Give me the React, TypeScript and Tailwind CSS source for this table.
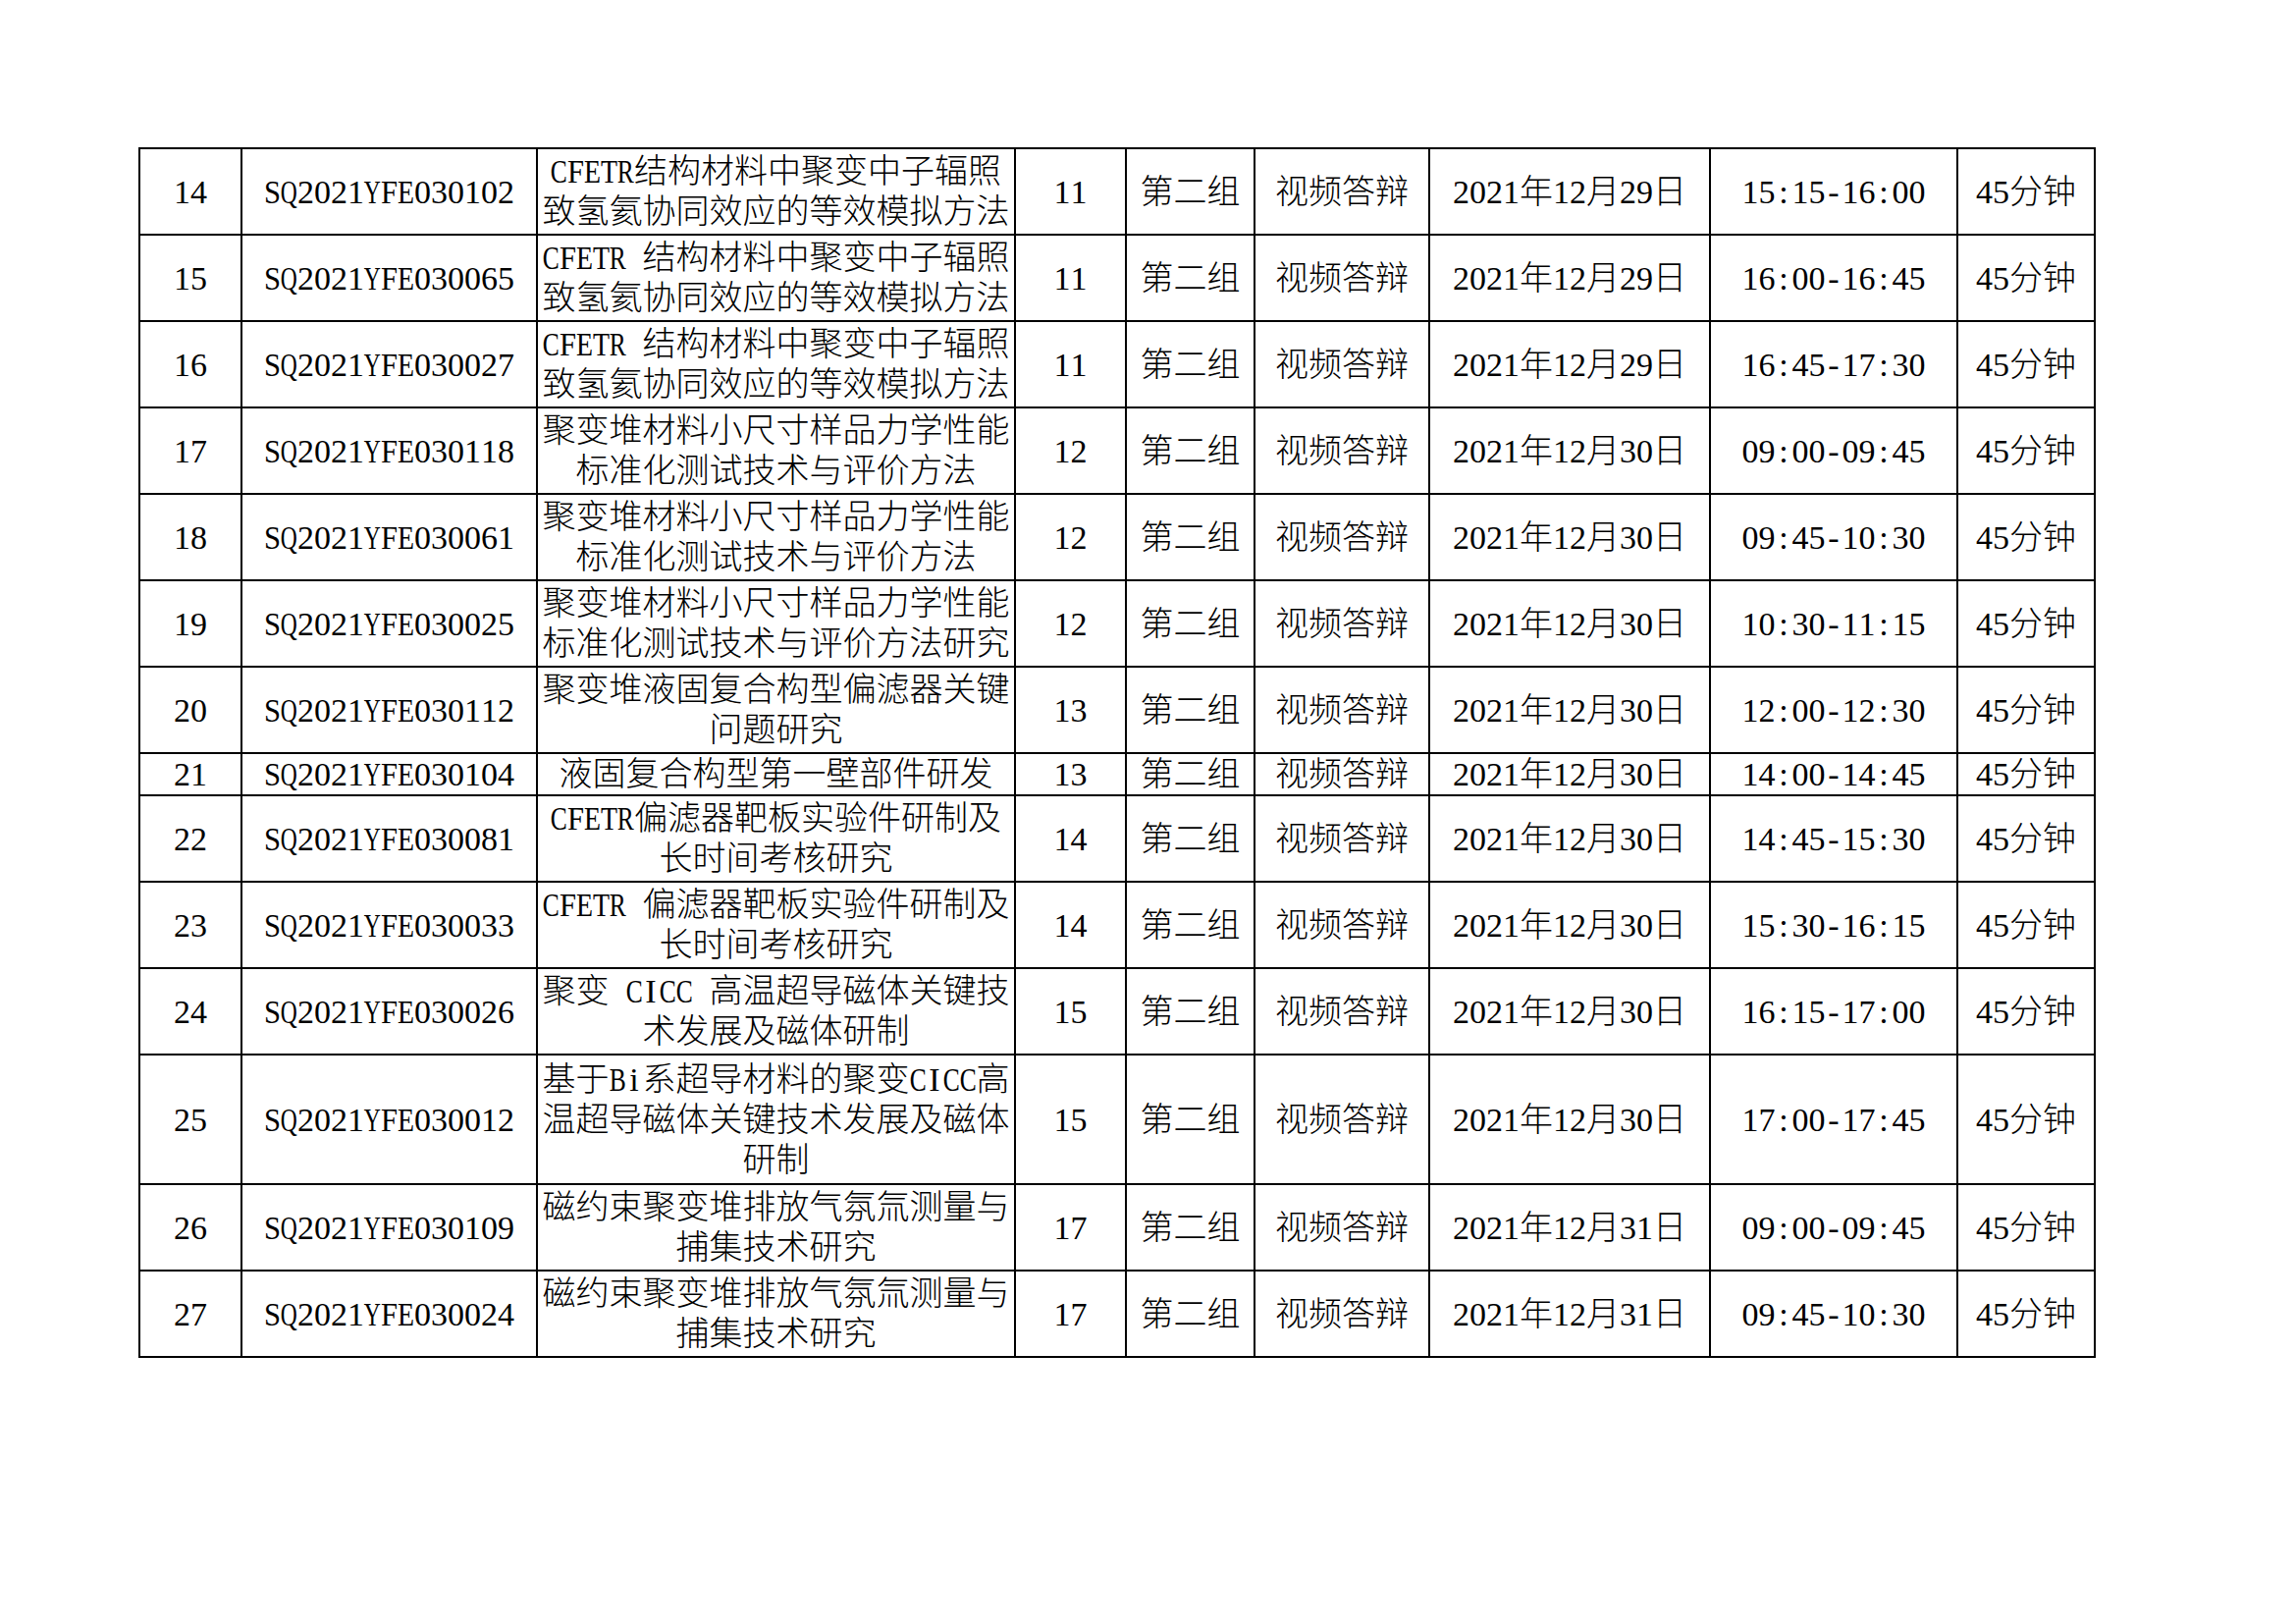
import { FC, ReactNode } from "react";

type Row = {
  no: number;
  code: string;
  title: string[];
  batch: number;
  group: string;
  mode: string;
  date: string;
  time: string;
  length: string;
};

const rows: Row[] = [
  { no: 14, code: "SQ2021YFE030102", title: ["CFETR结构材料中聚变中子辐照", "致氢氦协同效应的等效模拟方法"], batch: 11, group: "第二组", mode: "视频答辩", date: "2021年12月29日", time: "15:15-16:00", length: "45分钟" },
  { no: 15, code: "SQ2021YFE030065", title: ["CFETR 结构材料中聚变中子辐照", "致氢氦协同效应的等效模拟方法"], batch: 11, group: "第二组", mode: "视频答辩", date: "2021年12月29日", time: "16:00-16:45", length: "45分钟" },
  { no: 16, code: "SQ2021YFE030027", title: ["CFETR 结构材料中聚变中子辐照", "致氢氦协同效应的等效模拟方法"], batch: 11, group: "第二组", mode: "视频答辩", date: "2021年12月29日", time: "16:45-17:30", length: "45分钟" },
  { no: 17, code: "SQ2021YFE030118", title: ["聚变堆材料小尺寸样品力学性能", "标准化测试技术与评价方法"], batch: 12, group: "第二组", mode: "视频答辩", date: "2021年12月30日", time: "09:00-09:45", length: "45分钟" },
  { no: 18, code: "SQ2021YFE030061", title: ["聚变堆材料小尺寸样品力学性能", "标准化测试技术与评价方法"], batch: 12, group: "第二组", mode: "视频答辩", date: "2021年12月30日", time: "09:45-10:30", length: "45分钟" },
  { no: 19, code: "SQ2021YFE030025", title: ["聚变堆材料小尺寸样品力学性能", "标准化测试技术与评价方法研究"], batch: 12, group: "第二组", mode: "视频答辩", date: "2021年12月30日", time: "10:30-11:15", length: "45分钟" },
  { no: 20, code: "SQ2021YFE030112", title: ["聚变堆液固复合构型偏滤器关键", "问题研究"], batch: 13, group: "第二组", mode: "视频答辩", date: "2021年12月30日", time: "12:00-12:30", length: "45分钟" },
  { no: 21, code: "SQ2021YFE030104", title: ["液固复合构型第一壁部件研发"], batch: 13, group: "第二组", mode: "视频答辩", date: "2021年12月30日", time: "14:00-14:45", length: "45分钟" },
  { no: 22, code: "SQ2021YFE030081", title: ["CFETR偏滤器靶板实验件研制及", "长时间考核研究"], batch: 14, group: "第二组", mode: "视频答辩", date: "2021年12月30日", time: "14:45-15:30", length: "45分钟" },
  { no: 23, code: "SQ2021YFE030033", title: ["CFETR 偏滤器靶板实验件研制及", "长时间考核研究"], batch: 14, group: "第二组", mode: "视频答辩", date: "2021年12月30日", time: "15:30-16:15", length: "45分钟" },
  { no: 24, code: "SQ2021YFE030026", title: ["聚变 CICC 高温超导磁体关键技", "术发展及磁体研制"], batch: 15, group: "第二组", mode: "视频答辩", date: "2021年12月30日", time: "16:15-17:00", length: "45分钟" },
  { no: 25, code: "SQ2021YFE030012", title: ["基于Bi系超导材料的聚变CICC高", "温超导磁体关键技术发展及磁体", "研制"], batch: 15, group: "第二组", mode: "视频答辩", date: "2021年12月30日", time: "17:00-17:45", length: "45分钟" },
  { no: 26, code: "SQ2021YFE030109", title: ["磁约束聚变堆排放气氛氚测量与", "捕集技术研究"], batch: 17, group: "第二组", mode: "视频答辩", date: "2021年12月31日", time: "09:00-09:45", length: "45分钟" },
  { no: 27, code: "SQ2021YFE030024", title: ["磁约束聚变堆排放气氛氚测量与", "捕集技术研究"], batch: 17, group: "第二组", mode: "视频答辩", date: "2021年12月31日", time: "09:45-10:30", length: "45分钟" },
];

// Times / Liberation Serif advance widths (em), used to squeeze latin glyphs into half-width boxes
const latinWidth: Record<string, number> = {
  B: 0.667, C: 0.667, E: 0.611, F: 0.556, I: 0.333, Q: 0.722, R: 0.667,
  S: 0.556, T: 0.611, Y: 0.722, i: 0.278, ":": 0.278, "-": 0.333, " ": 0.25,
};

// the source font sets every latin character on a half-em grid
function halfWidth(text: string): ReactNode[] {
  const out: ReactNode[] = [];
  let run = "";
  [...text].forEach((ch, i) => {
    if (ch.charCodeAt(0) > 0x2e80) {
      run += ch;
      return;
    }
    if (run) {
      out.push(run);
      run = "";
    }
    const w = latinWidth[ch] ?? 0.5;
    const scale = Math.min(1, 0.5 / w);
    out.push(
      <span key={i} className="inline-flex w-[17px] justify-center">
        <span className="inline-block" style={{ transform: `scaleX(${scale})` }}>
          {ch === " " ? "\u00a0" : ch}
        </span>
      </span>
    );
  });
  if (run) out.push(run);
  return out;
}

const rowHeight: Record<number, string> = {
  1: "h-[41px]",
  2: "h-[88px]",
  3: "h-[132px]",
};

const cell = "border-2 border-black p-0 text-center align-middle whitespace-nowrap";

const App: FC = () => {
  return (
    <div
      className="min-h-screen bg-white pl-[141px] pt-[150px] text-[34px] leading-[41px] font-light text-black"
      style={{ fontFamily: '"Liberation Serif", "Noto Sans CJK SC", serif' }}
    >
      <table className="w-[1994px] table-fixed border-collapse">
        <colgroup>
          <col className="w-[104px]" />
          <col className="w-[301px]" />
          <col className="w-[487px]" />
          <col className="w-[113px]" />
          <col className="w-[131px]" />
          <col className="w-[178px]" />
          <col className="w-[286px]" />
          <col className="w-[252px]" />
          <col className="w-[140px]" />
        </colgroup>
        <tbody>
          {rows.map((r) => (
            <tr key={r.no} className={rowHeight[r.title.length]}>
              <td className={cell}>{halfWidth(String(r.no))}</td>
              <td className={cell}>{halfWidth(r.code)}</td>
              <td className={cell}>
                {r.title.map((line, i) => (
                  <div key={i}>{halfWidth(line)}</div>
                ))}
              </td>
              <td className={cell}>{halfWidth(String(r.batch))}</td>
              <td className={cell}>{r.group}</td>
              <td className={cell}>{r.mode}</td>
              <td className={cell}>{halfWidth(r.date)}</td>
              <td className={cell}>{halfWidth(r.time)}</td>
              <td className={cell}>{halfWidth(r.length)}</td>
            </tr>
          ))}
        </tbody>
      </table>
    </div>
  );
};

export default App;
